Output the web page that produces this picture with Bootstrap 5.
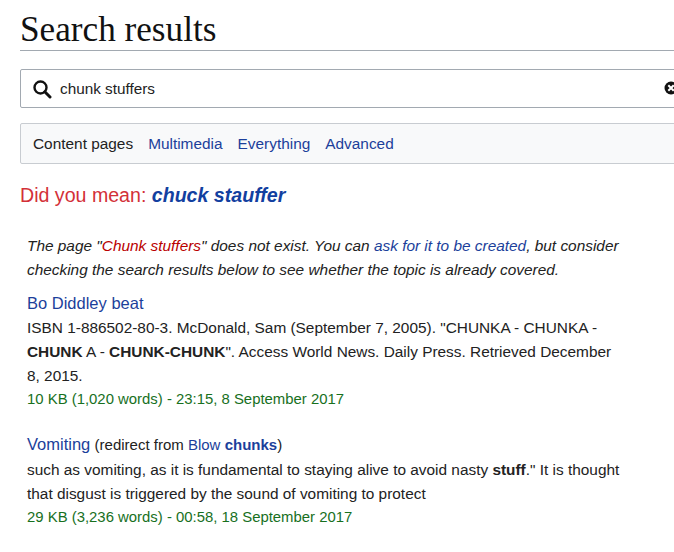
<!DOCTYPE html>
<html lang="en">
<head>
<meta charset="utf-8">
<title>Search results</title>
<link href="https://cdn.jsdelivr.net/npm/bootstrap@5.3.0/dist/css/bootstrap.min.css" rel="stylesheet">
<style>
html, body { overflow: hidden; height: 100%; }
body { font-family: "Liberation Sans", Arial, sans-serif; color: #222; background: #fff; font-size: 15.4px; line-height: 24px; }
.page-shell { width: 674px; padding: 0 0 0 20px; }
.page-title { font-family: "Liberation Serif", serif; font-size: 35.2px; line-height: 40px; margin: 10px 0 0; padding-bottom: 0; color: #111; border-bottom: 1px solid #a2a9b1; }
.search-box { width: 670px; height: 39px; margin-top: 18px; border: 1px solid #a2a9b1; border-radius: 2px; padding-left: 11px; gap: 8px; font-size: 15.3px; color: #222; position: relative; }
.clear-icon { position: absolute; left: 643px; top: 11px; }
.tab-bar { width: 670px; height: 41px; margin-top: 15px; background: #f8f9fa; border: 1px solid #c8ccd1; border-radius: 2px; padding-left: 12px; gap: 15px; font-size: 15.4px; }
.tab-bar a, .link-blue { color: #1c3f9b; text-decoration: none; }
.did-mean { margin-top: 19px; font-size: 19.6px; line-height: 24px; color: #d33038; }
.did-mean a { color: #1240a0; font-weight: 700; font-style: italic; text-decoration: none; }
.notice { margin: 27px 0 0 7px; width: 606px; font-style: italic; }
.notice .red-link { color: #ba0000; text-decoration: none; }
.result-item { margin: 0 0 0 7px; width: 595px; }
.first-item { margin-top: 10px; }
.next-item { margin-top: 22px; }
.result-head { line-height: 22px; padding-bottom: 2px; }
.result-title { font-size: 16.5px; }
.result-meta { color: #18701e; line-height: 23px; font-size: 14.9px; }
.redirect-note { font-size: 15px; }
</style>
</head>
<body>
<div class="page-shell">
  <h1 class="page-title">Search results</h1>
  <div class="search-box d-flex align-items-center">
    <svg width="20" height="20" viewBox="0 0 20 20" aria-hidden="true"><circle cx="8.5" cy="8.5" r="6" fill="none" stroke="#111" stroke-width="2.4"/><path d="M12.8 12.8 L18 18" stroke="#111" stroke-width="3" stroke-linecap="round"/></svg>
    <span>chunk stuffers</span>
    <svg class="clear-icon" width="14" height="14" viewBox="0 0 14 14" aria-hidden="true"><circle cx="7" cy="7" r="6.5" fill="#111"/><path d="M4.3 4.3 L9.7 9.7 M9.7 4.3 L4.3 9.7" stroke="#fff" stroke-width="2"/></svg>
  </div>
  <div class="tab-bar d-flex align-items-center">
    <span>Content pages</span>
    <a href="#">Multimedia</a>
    <a href="#">Everything</a>
    <a href="#">Advanced</a>
  </div>
  <div class="did-mean">Did you mean: <a href="#">chuck stauffer</a></div>
  <p class="notice">The page "<a class="red-link" href="#">Chunk stuffers</a>" does not exist. You can <a class="link-blue" href="#">ask for it to be created</a>, but consider checking the search results below to see whether the topic is already covered.</p>
  <div class="result-item first-item">
    <div class="result-head result-title"><a class="link-blue" href="#">Bo Diddley beat</a></div>
    <div>ISBN 1-886502-80-3. McDonald, Sam (September 7, 2005). "CHUNKA - CHUNKA - <b>CHUNK</b> A - <b>CHUNK-CHUNK</b>". Access World News. Daily Press. Retrieved December 8, 2015.</div>
    <div class="result-meta">10 KB (1,020 words) - 23:15, 8 September 2017</div>
  </div>
  <div class="result-item next-item">
    <div class="result-head"><a class="link-blue result-title" href="#">Vomiting</a> <span class="redirect-note">(redirect from <a class="link-blue" href="#">Blow <b>chunks</b></a>)</span></div>
    <div>such as vomiting, as it is fundamental to staying alive to avoid nasty <b>stuff</b>." It is thought that disgust is triggered by the sound of vomiting to protect</div>
    <div class="result-meta">29 KB (3,236 words) - 00:58, 18 September 2017</div>
  </div>
</div>
</body>
</html>
